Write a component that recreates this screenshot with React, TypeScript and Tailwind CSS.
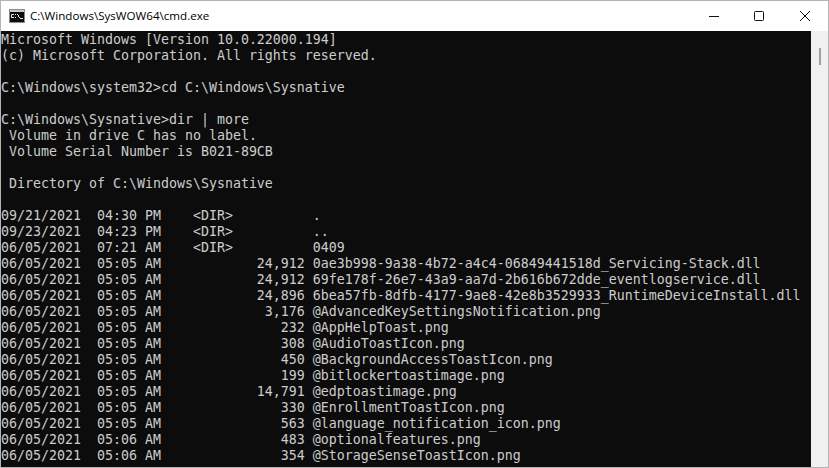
const lines = [
"Microsoft Windows [Version 10.0.22000.194]",
"(c) Microsoft Corporation. All rights reserved.",
"",
"C:\\Windows\\system32>cd C:\\Windows\\Sysnative",
"",
"C:\\Windows\\Sysnative>dir | more",
" Volume in drive C has no label.",
" Volume Serial Number is B021-89CB",
"",
" Directory of C:\\Windows\\Sysnative",
"",
"09/21/2021  04:30 PM    <DIR>          .",
"09/23/2021  04:23 PM    <DIR>          ..",
"06/05/2021  07:21 AM    <DIR>          0409",
"06/05/2021  05:05 AM            24,912 0ae3b998-9a38-4b72-a4c4-06849441518d_Servicing-Stack.dll",
"06/05/2021  05:05 AM            24,912 69fe178f-26e7-43a9-aa7d-2b616b672dde_eventlogservice.dll",
"06/05/2021  05:05 AM            24,896 6bea57fb-8dfb-4177-9ae8-42e8b3529933_RuntimeDeviceInstall.dll",
"06/05/2021  05:05 AM             3,176 @AdvancedKeySettingsNotification.png",
"06/05/2021  05:05 AM               232 @AppHelpToast.png",
"06/05/2021  05:05 AM               308 @AudioToastIcon.png",
"06/05/2021  05:05 AM               450 @BackgroundAccessToastIcon.png",
"06/05/2021  05:05 AM               199 @bitlockertoastimage.png",
"06/05/2021  05:05 AM            14,791 @edptoastimage.png",
"06/05/2021  05:05 AM               330 @EnrollmentToastIcon.png",
"06/05/2021  05:05 AM               563 @language_notification_icon.png",
"06/05/2021  05:06 AM               483 @optionalfeatures.png",
"06/05/2021  05:06 AM               354 @StorageSenseToastIcon.png",
];

export default function App() {
  return (
    <div className="w-[829px] h-[468px] flex flex-col overflow-hidden bg-white border border-[#b4b4b4]">
      <div className="h-[30px] flex items-center shrink-0 bg-white">
        <svg width="16" height="14" viewBox="0 0 16 14" className="ml-[8px] mr-[5px]">
          <rect x="0.5" y="0.5" width="15" height="13" fill="#0c0c0c" stroke="#8c8c8c" />
          <rect x="1" y="1" width="14" height="2" fill="#c8c8c8" />
          <path d="M3 5h2v1H3v2h2v1H3a1 1 0 0 1-1-1V6a1 1 0 0 1 1-1zM6 5h1v1H6zM6 8h1v1H6zM8 5h1v1h1v2h1v1h-1V8H9V6H8zM11 9h3v1h-3z" fill="#e8e8e8" />
        </svg>
        <span className="font-['Open_Sans',sans-serif] text-[11.6px] text-black">C:\Windows\SysWOW64\cmd.exe</span>
        <div className="ml-auto flex h-full">
          <div className="w-[46px] flex items-center justify-center pl-px">
            <svg width="10" height="10" viewBox="0 0 10 10"><path d="M0 5.5h10" stroke="#111" /></svg>
          </div>
          <div className="w-[46px] flex items-center justify-center">
            <svg width="10" height="10" viewBox="0 0 10 10"><rect x="0.5" y="0.5" width="9" height="9" rx="1" fill="none" stroke="#111" /></svg>
          </div>
          <div className="w-[46px] flex items-center justify-center">
            <svg width="10" height="10" viewBox="0 0 10 10"><path d="M0 0l10 10M10 0L0 10" stroke="#111" /></svg>
          </div>
        </div>
      </div>
      <div className="flex-1 flex min-h-0 bg-[#0c0c0c]">
        <pre className="flex-1 overflow-hidden font-['DejaVu_Sans_Mono',monospace] text-[13.29px] leading-[16px] text-[#cccccc] pt-px">
          {lines.join("\n")}
        </pre>
        <div className="w-[17px] shrink-0 bg-[#f0f0f0] flex justify-center pt-[17px]">
          <div className="w-[2px] h-[17px] bg-[#a0a0a0]" />
        </div>
      </div>
    </div>
  );
}
